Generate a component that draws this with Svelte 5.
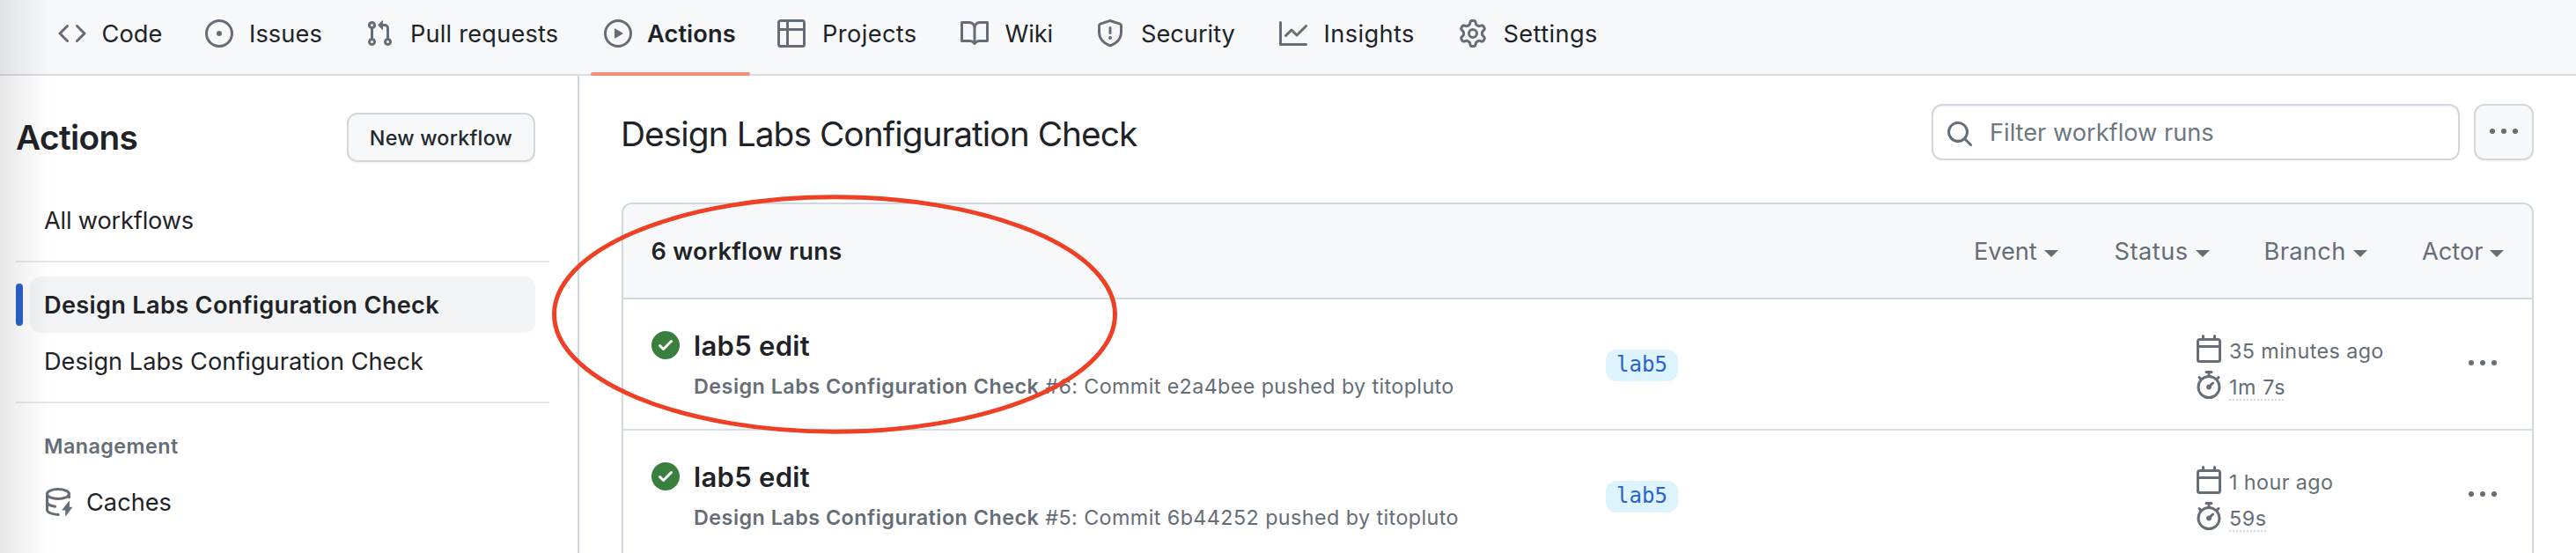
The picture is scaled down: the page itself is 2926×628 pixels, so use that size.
<script>
  const icons = {
    code: 'm11.28 3.22 4.25 4.25a.75.75 0 0 1 0 1.06l-4.25 4.25a.749.749 0 0 1-1.275-.326.749.749 0 0 1 .215-.734L13.94 8l-3.72-3.72a.749.749 0 0 1 .326-1.275.749.749 0 0 1 .734.215Zm-6.56 0a.751.751 0 0 1 1.042.018.751.751 0 0 1 .018 1.042L2.06 8l3.72 3.72a.749.749 0 0 1-.326 1.275.749.749 0 0 1-.734-.215L.47 8.53a.75.75 0 0 1 0-1.06Z',
    issue: 'M8 9.5a1.5 1.5 0 1 0 0-3 1.5 1.5 0 0 0 0 3ZM8 0a8 8 0 1 1 0 16A8 8 0 0 1 8 0ZM1.5 8a6.5 6.5 0 1 0 13 0 6.5 6.5 0 0 0-13 0Z',
    pull: 'M1.5 3.25a2.25 2.25 0 1 1 3 2.122v5.256a2.251 2.251 0 1 1-1.5 0V5.372A2.25 2.25 0 0 1 1.5 3.25Zm5.677-.177L9.573.677A.25.25 0 0 1 10 .854V2.5h1A2.5 2.5 0 0 1 13.5 5v5.628a2.251 2.251 0 1 1-1.5 0V5a1 1 0 0 0-1-1h-1v1.646a.25.25 0 0 1-.427.177L7.177 3.427a.25.25 0 0 1 0-.354ZM3.75 2.5a.75.75 0 1 0 0 1.5.75.75 0 0 0 0-1.5Zm0 9.5a.75.75 0 1 0 0 1.5.75.75 0 0 0 0-1.5Zm8.25.75a.75.75 0 1 0 1.5 0 .75.75 0 0 0-1.5 0Z',
    play: 'M8 0a8 8 0 1 1 0 16A8 8 0 0 1 8 0ZM1.5 8a6.5 6.5 0 1 0 13 0 6.5 6.5 0 0 0-13 0Zm4.879-2.773 4.264 2.559a.25.25 0 0 1 0 .428l-4.264 2.559A.25.25 0 0 1 6 10.559V5.442a.25.25 0 0 1 .379-.215Z',
    table: 'M0 1.75C0 .784.784 0 1.75 0h12.5C15.216 0 16 .784 16 1.75v12.5A1.75 1.75 0 0 1 14.25 16H1.75A1.75 1.75 0 0 1 0 14.25ZM6.5 6.5v8h7.75a.25.25 0 0 0 .25-.25V6.5Zm8-1.5V1.75a.25.25 0 0 0-.25-.25H6.5V5Zm-13 1.5v7.75c0 .138.112.25.25.25H5v-8ZM5 5V1.5H1.75a.25.25 0 0 0-.25.25V5Z',
    book: 'M0 1.75A.75.75 0 0 1 .75 1h4.253c1.227 0 2.317.59 3 1.501A3.743 3.743 0 0 1 11.006 1h4.245a.75.75 0 0 1 .75.75v10.5a.75.75 0 0 1-.75.75h-4.507a2.25 2.25 0 0 0-1.591.659l-.622.621a.75.75 0 0 1-1.06 0l-.622-.621A2.25 2.25 0 0 0 5.258 13H.75a.75.75 0 0 1-.75-.75Zm7.251 10.324.004-5.073-.002-2.253A2.25 2.25 0 0 0 5.003 2.5H1.5v9h3.757a3.75 3.75 0 0 1 1.994.574ZM8.755 4.75l-.004 7.322a3.752 3.752 0 0 1 1.992-.572H14.5v-9h-3.495a2.25 2.25 0 0 0-2.25 2.25Z',
    shield: 'M7.467.133a1.748 1.748 0 0 1 1.066 0l5.25 1.68A1.75 1.75 0 0 1 15 3.48V7c0 1.566-.32 3.182-1.303 4.682-.983 1.498-2.585 2.813-5.032 3.855a1.697 1.697 0 0 1-1.33 0c-2.447-1.042-4.049-2.357-5.032-3.855C1.32 10.182 1 8.566 1 7V3.48a1.75 1.75 0 0 1 1.217-1.667Zm.61 1.429a.25.25 0 0 0-.153 0l-5.25 1.68a.25.25 0 0 0-.174.238V7c0 1.358.275 2.666 1.057 3.86.784 1.194 2.121 2.34 4.366 3.297a.196.196 0 0 0 .154 0c2.245-.956 3.582-2.104 4.366-3.298C13.225 9.666 13.5 8.36 13.5 7V3.48a.251.251 0 0 0-.174-.237l-5.25-1.68ZM8.75 4.75v3a.75.75 0 0 1-1.5 0v-3a.75.75 0 0 1 1.5 0ZM9 10.5a1 1 0 1 1-2 0 1 1 0 0 1 2 0Z',
    graph: 'M1.5 1.75V13.5h13.75a.75.75 0 0 1 0 1.5H.75a.75.75 0 0 1-.75-.75V1.75a.75.75 0 0 1 1.5 0Zm14.28 2.53-5.25 5.25a.75.75 0 0 1-1.06 0L7 7.06 4.28 9.78a.751.751 0 0 1-1.042-.018.751.751 0 0 1-.018-1.042l3.25-3.25a.75.75 0 0 1 1.06 0L10 7.94l4.72-4.72a.751.751 0 0 1 1.042.018.751.751 0 0 1 .018 1.042Z',
    gear: 'M8 0a8.2 8.2 0 0 1 .701.031C9.444.095 9.99.645 10.16 1.29l.288 1.107c.018.066.079.158.212.224.231.114.454.243.668.386.123.082.233.09.299.071l1.103-.303c.644-.176 1.392.021 1.82.63.27.385.506.792.704 1.218.315.675.111 1.422-.364 1.891l-.814.806c-.049.048-.098.147-.088.294.016.257.016.515 0 .772-.01.147.038.246.088.294l.814.806c.475.469.679 1.216.364 1.891a7.977 7.977 0 0 1-.704 1.217c-.428.61-1.176.807-1.82.63l-1.102-.302c-.067-.019-.177-.011-.3.071a5.909 5.909 0 0 1-.668.386c-.133.066-.194.158-.211.224l-.29 1.106c-.168.646-.715 1.196-1.458 1.26a8.006 8.006 0 0 1-1.402 0c-.743-.064-1.289-.614-1.458-1.26l-.289-1.106c-.018-.066-.079-.158-.212-.224a5.738 5.738 0 0 1-.668-.386c-.123-.082-.233-.09-.299-.071l-1.103.303c-.644.176-1.392-.021-1.82-.63a8.12 8.12 0 0 1-.704-1.218c-.315-.675-.111-1.422.363-1.891l.815-.806c.05-.048.098-.147.088-.294a6.214 6.214 0 0 1 0-.772c.01-.147-.038-.246-.088-.294l-.815-.806C.635 6.045.431 5.298.746 4.623a7.92 7.92 0 0 1 .704-1.217c.428-.61 1.176-.807 1.82-.63l1.102.302c.067.019.177.011.3-.071.214-.143.437-.272.668-.386.133-.066.194-.158.211-.224l.29-1.106C6.009.645 6.556.095 7.299.03 7.53.01 7.764 0 8 0Zm-.571 1.525c-.036.003-.108.036-.137.146l-.289 1.105c-.147.561-.549.967-.998 1.189-.173.086-.34.183-.5.29-.417.278-.97.423-1.529.27l-1.103-.303c-.109-.03-.175.016-.195.045-.22.312-.412.644-.573.99-.014.031-.021.11.059.19l.815.806c.411.406.562.957.53 1.456a4.709 4.709 0 0 0 0 .582c.032.499-.119 1.05-.53 1.456l-.815.806c-.081.08-.073.159-.059.19.162.346.353.677.573.989.02.03.085.076.195.046l1.102-.303c.56-.153 1.113-.008 1.53.27.161.107.328.204.501.29.447.222.85.629.997 1.189l.289 1.105c.029.109.101.143.137.146a6.6 6.6 0 0 0 1.142 0c.036-.003.108-.036.137-.146l.289-1.105c.147-.561.549-.967.998-1.189.173-.086.34-.183.5-.29.417-.278.97-.423 1.529-.27l1.103.303c.109.029.175-.016.195-.045.22-.313.411-.644.573-.99.014-.031.021-.11-.059-.19l-.815-.806c-.411-.406-.562-.957-.53-1.456a4.709 4.709 0 0 0 0-.582c-.032-.499.119-1.05.53-1.456l.815-.806c.081-.08.073-.159.059-.19a6.464 6.464 0 0 0-.573-.989c-.02-.03-.085-.076-.195-.046l-1.102.303c-.56.153-1.113.008-1.53-.27a4.44 4.44 0 0 0-.501-.29c-.447-.222-.85-.629-.997-1.189l-.289-1.105c-.029-.11-.101-.143-.137-.146a6.6 6.6 0 0 0-1.142 0ZM11 8a3 3 0 1 1-6 0 3 3 0 0 1 6 0ZM9.5 8a1.5 1.5 0 1 0-3.001.001A1.5 1.5 0 0 0 9.5 8Z',
    search: 'M10.68 11.74a6 6 0 0 1-7.922-8.982 6 6 0 0 1 8.982 7.922l3.04 3.04a.749.749 0 0 1-.326 1.275.749.749 0 0 1-.734-.215ZM11.5 7a4.499 4.499 0 1 0-8.997 0A4.499 4.499 0 0 0 11.5 7Z',
    kebab: 'M8 9a1.5 1.5 0 1 0 0-3 1.5 1.5 0 0 0 0 3ZM1.5 9a1.5 1.5 0 1 0 0-3 1.5 1.5 0 0 0 0 3Zm13 0a1.5 1.5 0 1 0 0-3 1.5 1.5 0 0 0 0 3Z',
    check: 'M8 16A8 8 0 1 1 8 0a8 8 0 0 1 0 16Zm3.78-9.72a.751.751 0 0 0-.018-1.042.751.751 0 0 0-1.042-.018L6.75 9.19 5.28 7.72a.751.751 0 0 0-1.042.018.751.751 0 0 0-.018 1.042l2 2a.75.75 0 0 0 1.06 0Z',
    calendar: 'M4.75 0a.75.75 0 0 1 .75.75V2h5V.75a.75.75 0 0 1 1.5 0V2h1.25c.966 0 1.75.784 1.75 1.75v10.5A1.75 1.75 0 0 1 13.25 16H2.75A1.75 1.75 0 0 1 1 14.25V3.75C1 2.784 1.784 2 2.75 2H4V.75A.75.75 0 0 1 4.75 0ZM2.5 7.5v6.75c0 .138.112.25.25.25h10.5a.25.25 0 0 0 .25-.25V7.5Zm10.75-4H2.75a.25.25 0 0 0-.25.25V6h11V3.75a.25.25 0 0 0-.25-.25Z',
    stopwatch: 'M5.75.75A.75.75 0 0 1 6.5 0h3a.75.75 0 0 1 0 1.5h-.75v1l-.001.041a6.724 6.724 0 0 1 3.464 1.435l.007-.006.75-.75a.749.749 0 0 1 1.275.326.749.749 0 0 1-.215.734l-.75.75-.006.007a6.75 6.75 0 1 1-10.548 0L2.72 5.03l-.75-.75a.751.751 0 0 1 .018-1.042.751.751 0 0 1 1.042-.018l.75.75.007.006A6.72 6.72 0 0 1 7.25 2.541V1.5H6.5a.75.75 0 0 1-.75-.75ZM8 14.5a5.25 5.25 0 1 0-.001-10.501A5.25 5.25 0 0 0 8 14.5Zm.389-6.7 1.33-1.33a.75.75 0 1 1 1.061 1.06L9.45 8.861A1.503 1.503 0 0 1 8 10.75a1.499 1.499 0 1 1 .389-2.95Z'
  };

  const tabs = [
    { icon: 'code', label: 'Code', width: 167.5, ls: 0.06 },
    { icon: 'issue', label: 'Issues', width: 182, ls: 0.1 },
    { icon: 'pull', label: 'Pull requests', width: 270.5, ls: 0.2, gap: 19 },
    { icon: 'play', label: 'Actions', width: 197.5, ls: 0.1, gap: 17.5 },
    { icon: 'table', label: 'Projects', width: 207.5, ls: 0.4, gap: 19 },
    { icon: 'book', label: 'Wiki', width: 154.5, ls: -0.1, gap: 19 },
    { icon: 'shield', label: 'Security', width: 208, ls: 0, gap: 19 },
    { icon: 'graph', label: 'Insights', width: 203.5, ls: 0.4, gap: 18.5 },
    { icon: 'gear', label: 'Settings', width: 170, ls: 0.4, gap: 19 }
  ];

  const filters = [
    { label: 'Event', width: 159.5, ls: -0.05 },
    { label: 'Status', width: 170, ls: 0.5 },
    { label: 'Branch', width: 179.5, ls: 0.36 },
    { label: 'Actor', width: 94, ls: 0 }
  ];

  const name = 'Design Labs Configuration Check';
  const runs = [
    { number: 6, commit: 'e2a4bee', when: '35 minutes ago', took: '1m 7s', ls: 0.39 },
    { number: 5, commit: '6b44252', when: '1 hour ago', took: '59s', ls: 0.43 }
  ];
</script>

{#snippet icon(id)}
  <svg class="icon" viewBox="0 0 16 16" aria-hidden="true"><path fill-rule="evenodd" d={icons[id]} /></svg>
{/snippet}

<div class="page">
  <nav class="tabs">
    {#each tabs as t}
      <div class="tab" class:active={t.label === 'Actions'} style="width:{t.width}px;gap:{t.gap ?? 18}px">
        {@render icon(t.icon)}<span style="letter-spacing:{t.ls}px">{t.label}</span>
      </div>
    {/each}
  </nav>

  <div class="body">
    <aside class="sidebar">
      <div class="side-head">
        <h2>Actions</h2>
        <button class="new">New workflow</button>
      </div>
      <div class="item all">All workflows</div>
      <hr />
      <div class="item selected">{name}</div>
      <div class="item">{name}</div>
      <hr />
      <div class="item group">Management</div>
      <div class="item caches">
        <svg class="icon" viewBox="0 0 16 16" aria-hidden="true">
          <g fill="none" stroke="currentColor" stroke-width="1.5" stroke-linecap="round">
            <ellipse cx="8" cy="3.5" rx="6.25" ry="2.75" />
            <path d="M1.75 3.5v9c0 1.4 2.6 2.6 6.4 2.75M1.75 8c0 1.2 1.8 2.3 4.6 2.65M14.25 3.5v1.9" />
          </g>
          <path d="M14.5 7.75v3.15h1.3a.2.2 0 0 1 .16.33l-3.4 4.7c-.14.18-.42.08-.42-.15v-2.98h-1.7a.22.22 0 0 1-.18-.35l3.82-4.85c.14-.18.42-.08.42.15Z" />
        </svg>
        <span>Caches</span>
      </div>
    </aside>

    <main>
      <div class="toolbar">
        <h1>{name}</h1>
        <div class="search">{@render icon('search')}<span>Filter workflow runs</span></div>
        <button class="more">{@render icon('kebab')}</button>
      </div>

      <section class="box">
        <header>
          <strong>6 workflow runs</strong>
          <div class="filters">
            {#each filters as f}
              <div class="filter" style="width:{f.width}px">
                <span style="letter-spacing:{f.ls}px">{f.label}</span><i class="caret"></i>
              </div>
            {/each}
          </div>
        </header>
        {#each runs as r}
          <div class="run">
            <div class="status">{@render icon('check')}</div>
            <div class="info">
              <div class="title">lab5 edit</div>
              <div class="sub"><b>{name}</b><span style="letter-spacing:{r.ls}px">#{r.number}: Commit {r.commit} pushed by titopluto</span></div>
            </div>
            <div class="branch"><span>lab5</span></div>
            <div class="meta">
              <div>{@render icon('calendar')}<span>{r.when}</span></div>
              <div>{@render icon('stopwatch')}<span class="took">{r.took}</span></div>
            </div>
            <div class="kebab">{@render icon('kebab')}</div>
          </div>
        {/each}
      </section>
    </main>
  </div>

  <div class="edge"></div>
  <svg class="mark" width="644" height="274" viewBox="0 0 644 274" aria-hidden="true">
    <ellipse cx="322" cy="137" rx="318.5" ry="133.2" fill="none" stroke="#ee4024" stroke-width="5" />
  </svg>
</div>

<style>
  :global(body) { background: #fff; }
  .page {
    position: relative;
    display: flex;
    flex-direction: column;
    width: 2926px;
    height: 628px;
    overflow: hidden;
    box-sizing: border-box;
    font-family: Inter, 'Liberation Sans', sans-serif;
    font-size: 27.2px;
    color: #1f2328;
    white-space: nowrap;
  }
  .page :global(*) { box-sizing: border-box; }
  .icon { width: 32px; height: 32px; flex: none; fill: currentColor; display: block; color: #656d76; }
  h1, h2 { margin: 0; }
  button { font-family: inherit; margin: 0; padding: 0; }

  .tabs {
    display: flex;
    flex: none;
    height: 86px;
    padding-left: 65.5px;
    background: #f6f8fa;
    border-bottom: 2px solid #d8dee4;
  }
  .tab { position: relative; display: flex; flex: none; align-items: center; height: 76px; }
  .active { font-weight: 600; }
  .active::after {
    content: '';
    position: absolute;
    left: -14.5px;
    top: 82px;
    width: 181px;
    height: 4px;
    border-radius: 2px;
    background: #f0907a;
  }

  .body { display: flex; flex: 1; min-height: 0; }
  .sidebar { width: 658px; flex: none; border-right: 2px solid #d0d7de; padding: 42px 0 0 18px; }
  .side-head { display: flex; align-items: center; justify-content: space-between; height: 56px; padding-right: 48px; margin-bottom: 34px; }
  h2 { font-size: 38.8px; font-weight: 600; letter-spacing: -0.66px; line-height: 56px; }
  .new {
    width: 214px;
    height: 56px;
    border: 2px solid #d5d8da;
    border-radius: 12px;
    background: #f6f8fa;
    box-shadow: 0 2px 0 rgba(31, 35, 40, 0.04);
    font-size: 23.3px;
    font-weight: 500;
    letter-spacing: 0.23px;
    color: #24292f;
  }
  .item { position: relative; display: flex; align-items: center; height: 64px; margin: 0 48px 0 16px; padding-left: 16px; }
  .all { letter-spacing: -0.18px; }
  hr { height: 2px; margin: 14px 32px 16px 0; border: 0; background: #e6eaed; }
  .selected { font-weight: 600; letter-spacing: 0.3px; border-radius: 12px; background: #f3f4f6; }
  .selected::before {
    content: '';
    position: absolute;
    left: -16px;
    top: 8px;
    width: 8px;
    height: 48px;
    border-radius: 6px;
    background: #2a62cd;
  }
  .group { font-size: 23.3px; font-weight: 600; letter-spacing: 0.46px; color: #656d76; }
  .caches { gap: 16px; }

  main { flex: 1; padding: 32px 48px 0; }
  .toolbar { display: flex; height: 64px; margin-bottom: 48px; }
  h1 { flex: 1; font-size: 38.8px; font-weight: 400; letter-spacing: -0.92px; line-height: 64px; padding-top: 2px; margin-left: -1px; }
  .search {
    display: flex;
    align-items: center;
    width: 600px;
    border: 2px solid #d0d7de;
    border-radius: 12px;
    padding-left: 14px;
    color: #6e7781;
    box-shadow: inset 0 2px 0 rgba(208, 215, 222, 0.2);
  }
  .search .icon { margin: 4px 18px 0 0; }
  .more {
    display: flex;
    align-items: center;
    justify-content: center;
    width: 68px;
    margin-left: 16px;
    border: 2px solid #d5d8da;
    border-radius: 12px;
    background: #f6f8fa;
    box-shadow: 0 2px 0 rgba(31, 35, 40, 0.04);
  }

  .box { border: 2px solid #d0d7de; border-radius: 12px 12px 0 0; height: 440px; }
  header {
    display: flex;
    align-items: center;
    justify-content: space-between;
    height: 108px;
    padding-left: 31.5px;
    border-bottom: 2px solid #d0d7de;
    border-radius: 10px 10px 0 0;
    background: #f6f8fa;
  }
  strong { font-weight: 600; letter-spacing: 0.3px; }
  .filters { display: flex; padding-right: 31px; color: #656d76; }
  .filter { display: flex; align-items: center; gap: 8px; }
  .caret { border: 8px solid transparent; border-top-color: currentColor; border-bottom: 0; margin-top: 6px; }

  .run { display: flex; height: 149px; border-bottom: 2px solid #d8dee4; padding: 36px 0 0 32px; }
  .status { width: 48px; flex: none; }
  .status .icon { color: #3b7f3f; }
  .info { width: 1036px; flex: none; }
  .title { font-size: 31px; font-weight: 600; letter-spacing: 0.3px; line-height: 40px; margin-top: -3px; }
  .sub { display: flex; gap: 7px; margin-top: 8px; font-size: 23.3px; line-height: 36px; color: #656d76; }
  .sub b { font-weight: 600; letter-spacing: 0.5px; }
  .branch { width: 669px; flex: none; padding-top: 21px; }
  .branch span {
    display: block;
    width: 82px;
    height: 36px;
    border-radius: 12px;
    background: #ddf4ff;
    color: #2a62cd;
    font: 24px/34px 'DejaVu Sans Mono', monospace;
    text-align: center;
  }
  .meta { display: flex; flex-direction: column; gap: 9px; width: 311px; flex: none; padding-top: 4px; font-size: 23.3px; letter-spacing: 0.42px; color: #656d76; }
  .meta div { display: flex; gap: 7px; height: 32px; line-height: 37px; }
  .took { height: 34px; letter-spacing: 0.63px; background: repeating-linear-gradient(90deg, #d0d7de 0 2px, transparent 2px 4px) 0 100% / 100% 2px no-repeat; }
  .kebab { padding-top: 21px; }

  .edge {
    position: absolute;
    inset: 0 auto 0 0;
    width: 62px;
    background: linear-gradient(90deg, rgba(0, 0, 0, 0.095), rgba(0, 0, 0, 0.055) 35%, rgba(0, 0, 0, 0.015) 75%, transparent);
  }
  .mark { position: absolute; left: 625.6px; top: 220.1px; }
</style>
